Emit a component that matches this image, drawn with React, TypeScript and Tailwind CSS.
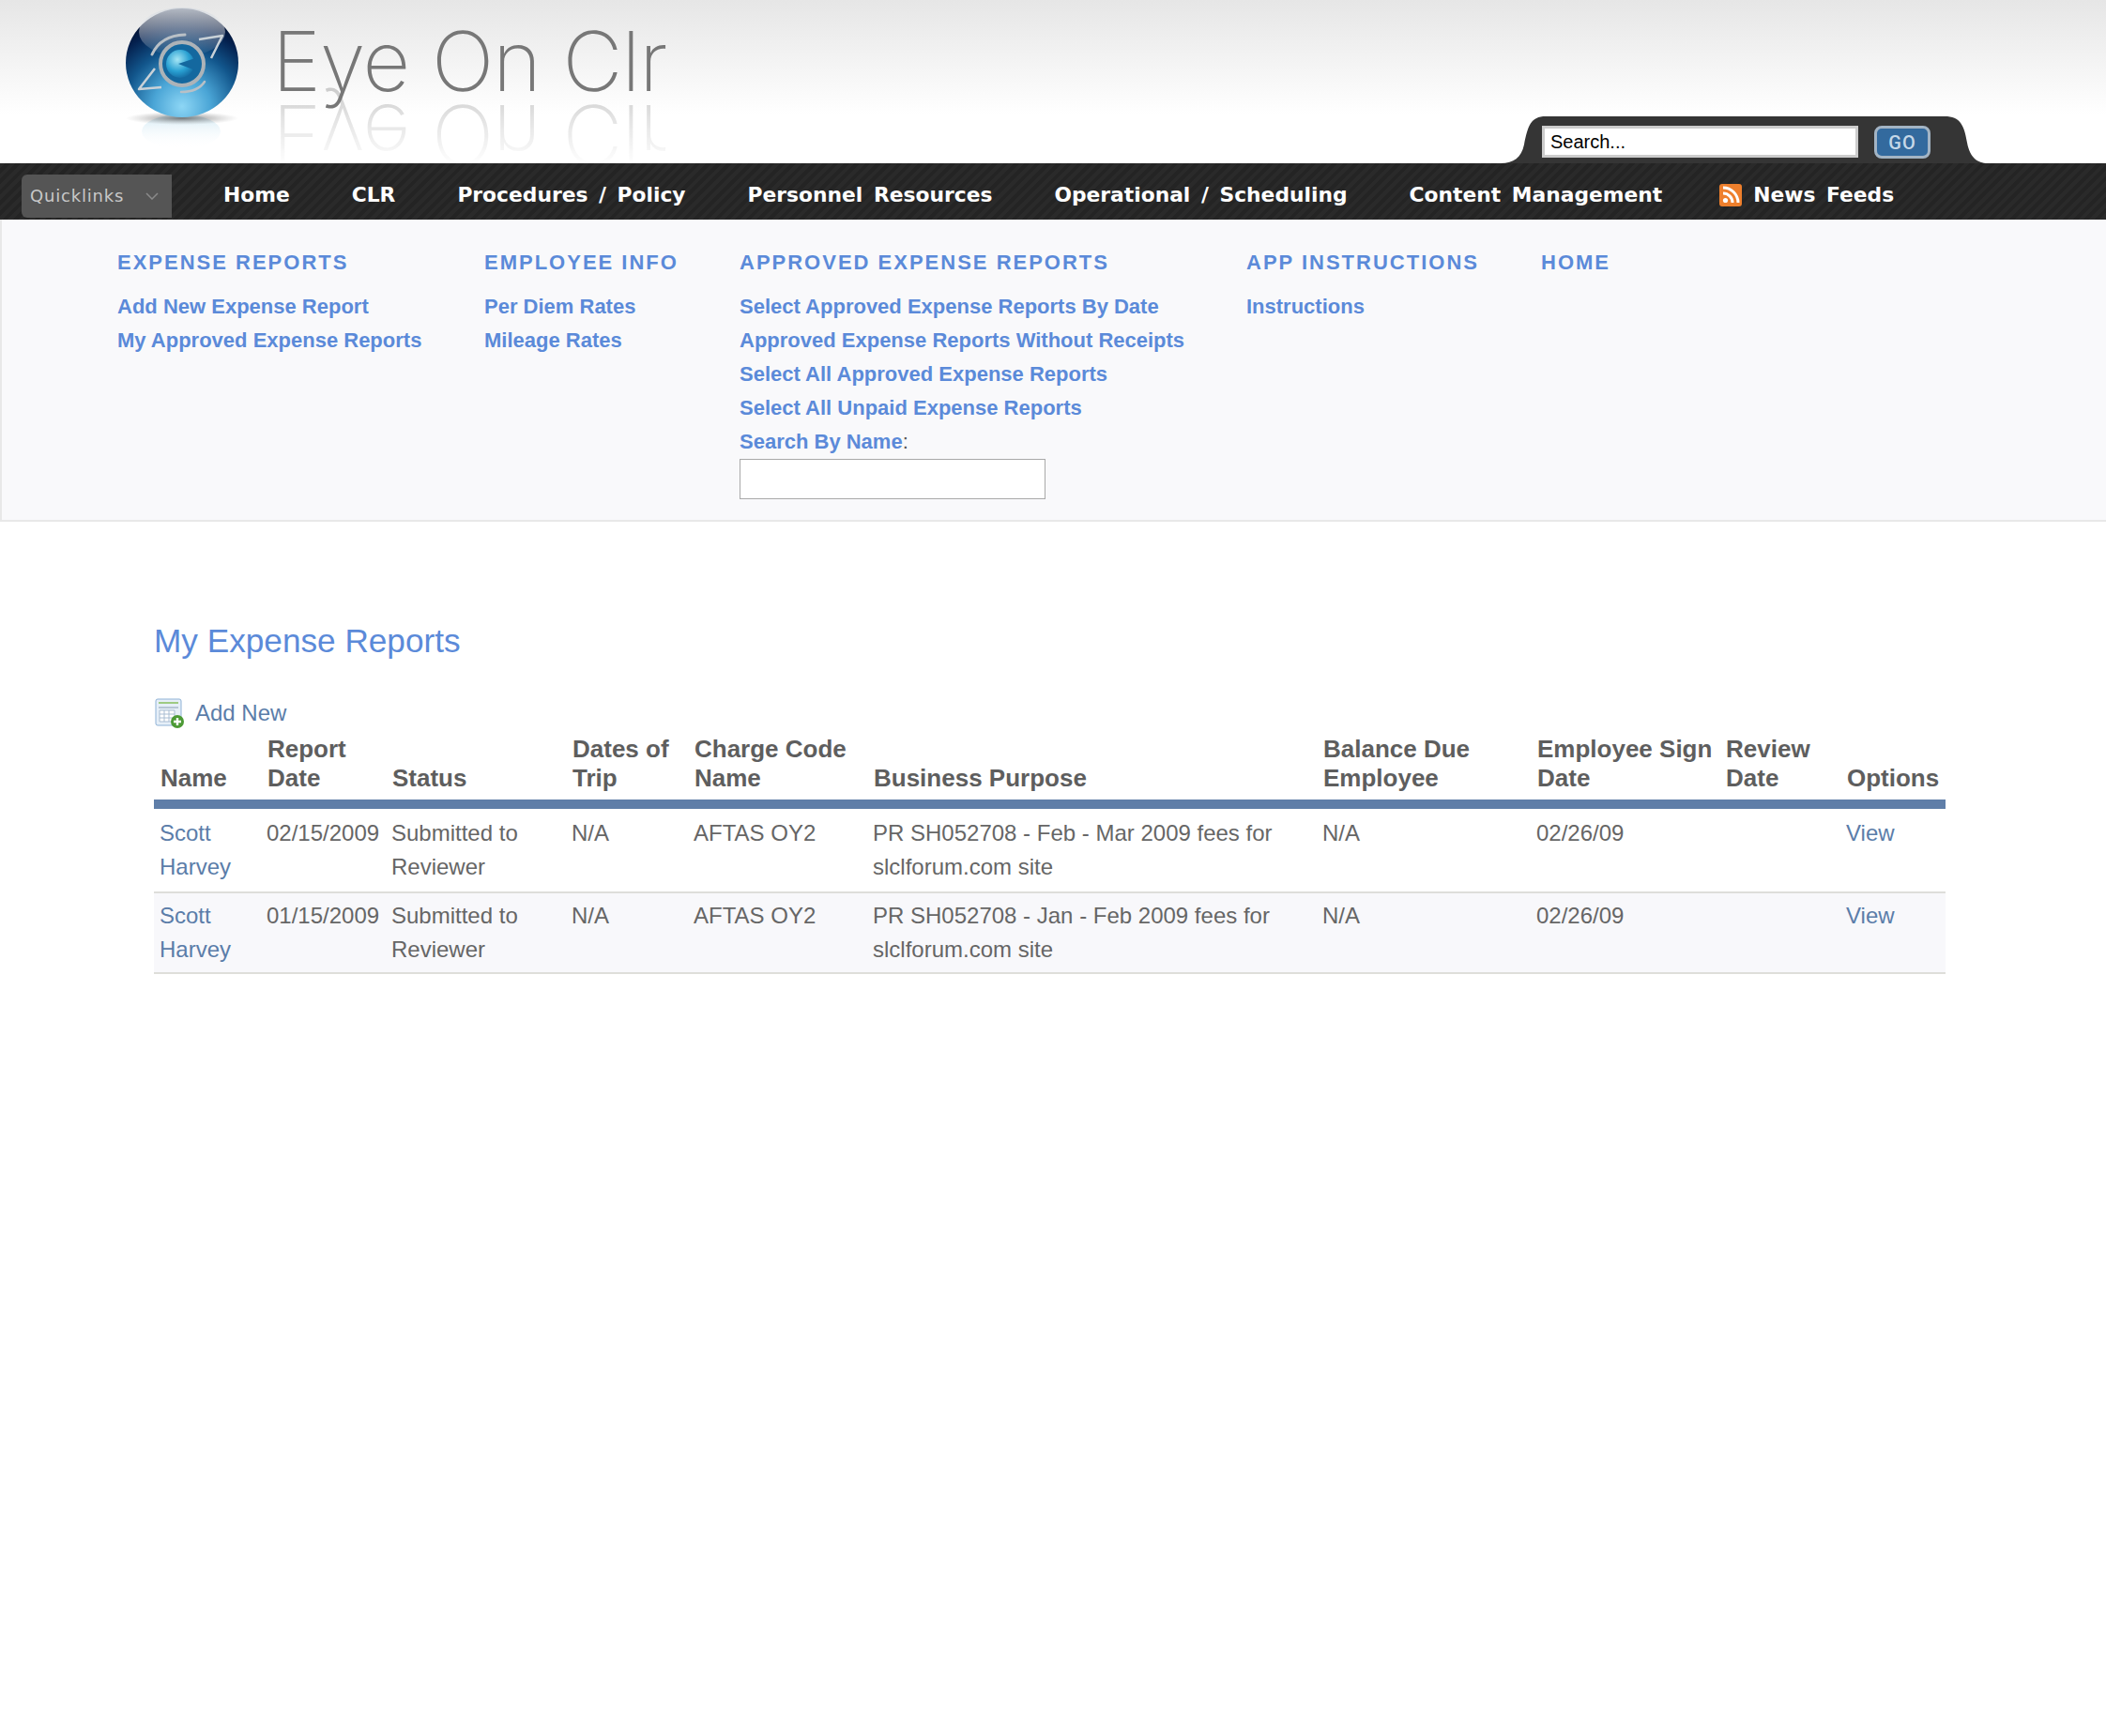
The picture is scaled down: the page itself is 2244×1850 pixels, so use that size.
const navItems = ["Home", "CLR", "Procedures / Policy", "Personnel Resources", "Operational / Scheduling", "Content Management"];

const menus = [
  { title: "EXPENSE REPORTS", links: ["Add New Expense Report", "My Approved Expense Reports"], cls: "w-[391px]" },
  { title: "EMPLOYEE INFO", links: ["Per Diem Rates", "Mileage Rates"], cls: "w-[272px]" },
  {
    title: "APPROVED EXPENSE REPORTS",
    links: ["Select Approved Expense Reports By Date", "Approved Expense Reports Without Receipts", "Select All Approved Expense Reports", "Select All Unpaid Expense Reports"],
    cls: "w-[540px]",
  },
  { title: "APP INSTRUCTIONS", links: ["Instructions"], cls: "w-[314px]" },
  { title: "HOME", links: [], cls: "" },
];

const headers = ["Name", "Report Date", "Status", "Dates of Trip", "Charge Code Name", "Business Purpose", "Balance Due Employee", "Employee Sign Date", "Review Date", "Options"];
const widths = ["w-[114px]", "w-[133px]", "w-[192px]", "w-[130px]", "w-[191px]", "w-[479px]", "w-[228px]", "w-[201px]", "w-[129px]", "w-[112px]"];

const rows = [
  { date: "02/15/2009", purpose: "PR SH052708 - Feb - Mar 2009 fees for slclforum.com site", bg: "", pad: "pt-[8px] pb-[8px]" },
  { date: "01/15/2009", purpose: "PR SH052708 - Jan - Feb 2009 fees for slclforum.com site", bg: "bg-[#f8f8fb]", pad: "pt-[6px] pb-[6px]" },
];

function Globe() {
  return (
    <svg width="130" height="174" viewBox="0 0 130 174" className="block">
      <defs>
        <radialGradient id="ball" cx="0.5" cy="0.9" r="0.85">
          <stop offset="0" stopColor="#8dd6f5" />
          <stop offset="0.3" stopColor="#4aa5d6" />
          <stop offset="0.6" stopColor="#12568c" />
          <stop offset="0.85" stopColor="#04204e" />
          <stop offset="1" stopColor="#020f2e" />
        </radialGradient>
        <linearGradient id="shine" x1="0" y1="0" x2="0" y2="1">
          <stop offset="0" stopColor="#d5dae0" stopOpacity="0.85" />
          <stop offset="1" stopColor="#ffffff" stopOpacity="0" />
        </linearGradient>
        <radialGradient id="iris" cx="0.4" cy="0.35" r="0.7">
          <stop offset="0" stopColor="#a5e6f5" />
          <stop offset="0.6" stopColor="#29a0d2" />
          <stop offset="1" stopColor="#14689f" />
        </radialGradient>
        <linearGradient id="refl" x1="0" y1="0" x2="0" y2="1">
          <stop offset="0" stopColor="#b5dcee" stopOpacity="0.6" />
          <stop offset="1" stopColor="#ffffff" stopOpacity="0" />
        </linearGradient>
        <radialGradient id="shadow" cx="0.5" cy="0.5" r="0.5">
          <stop offset="0" stopColor="#444" stopOpacity="0.7" />
          <stop offset="1" stopColor="#888" stopOpacity="0" />
        </radialGradient>
      </defs>
      <ellipse cx="64" cy="140" rx="42" ry="18" fill="url(#refl)" />
      <ellipse cx="65" cy="126" rx="60" ry="7" fill="url(#shadow)" />
      <ellipse cx="65" cy="67" rx="60" ry="58" fill="url(#ball)" />
      <ellipse cx="65" cy="34" rx="46" ry="26" fill="url(#shine)" />
      <circle cx="65" cy="68" r="23" fill="#14689f" stroke="#adb3b8" strokeWidth="4" />
      <circle cx="63" cy="68" r="15" fill="url(#iris)" />
      <path d="M79 62 L61 68 L79 75z" fill="#14689f" />
      <path d="M33 58 Q42 38 68 37" fill="none" stroke="#b9c0c6" strokeWidth="3" strokeLinecap="round" />
      <path d="M83 42 L108 38 L96 62" fill="none" stroke="#c9d1d7" strokeWidth="2.5" strokeLinejoin="round" />
      <path d="M36 73 L19 95 L43 93" fill="none" stroke="#c9d1d7" strokeWidth="2.5" strokeLinejoin="round" />
      <path d="M64 98 Q82 98 89 87" fill="none" stroke="#b9c0c6" strokeWidth="2.5" strokeLinecap="round" />
    </svg>
  );
}

function SheetIcon() {
  return (
    <svg width="32" height="32" viewBox="0 0 32 32" className="block ml-[1px]">
      <rect x="1" y="1" width="27" height="28" rx="2" fill="#e6eff8" stroke="#8fb2d6" />
      <rect x="4" y="4" width="21" height="2" fill="#9ecb83" />
      <rect x="4" y="9" width="21" height="2" fill="#b7c6d6" />
      <path d="M5 13h16v12H5z" fill="#fff" stroke="#a9bdd2" />
      <path d="M10 13v12M15 13v12M5 17h16M5 21h16" stroke="#a9bdd2" />
      <circle cx="24" cy="25" r="7" fill="#4c9a35" />
      <path d="M24 21v8M20 25h8" stroke="#fff" strokeWidth="2.4" />
    </svg>
  );
}

function LogoText() {
  return (
    <div className="font-['Inter',sans-serif] font-[200] text-[88px] leading-[104px] tracking-[-1px] text-[#777777] whitespace-nowrap">
      Eye On Clr
    </div>
  );
}

export default function App() {
  return (
    <div className="min-h-[1850px] bg-white font-['Liberation_Sans',Arial,sans-serif] text-[24px] leading-[36px] text-[#666666]">
      <header className="relative h-[174px] overflow-hidden bg-gradient-to-b from-[#e6e6e6] to-[#ffffff] to-[70%]">
        <div className="flex pl-[129px]">
          <Globe />
          <div className="ml-[31px] pt-[13px]">
            <LogoText />
            <div className="-mt-[25px] opacity-35 -scale-y-100 [mask-image:linear-gradient(to_bottom,transparent_20%,black)]">
              <LogoText />
            </div>
          </div>
        </div>
        <div className="absolute bottom-0 left-[1599px] w-[519px] h-[50px]">
          <svg width="519" height="50" viewBox="0 0 519 50" className="absolute inset-0">
            <path d="M0 50C14 50 22 44 25 30C29 10 32 0 48 0L473 0C490 0 494 10 497 28C500 44 508 50 519 50Z" fill="#353535" />
          </svg>
          <div className="relative flex items-start pl-[44px] pt-[10px]">
            <div className="w-[337px] h-[34px] bg-white border-[3px] border-[#cccccc] pl-[6px] text-[20px] leading-[28px] text-black">Search...</div>
            <div className="ml-[17px] w-[60px] h-[35px] rounded-[8px] bg-[#336a9e] border-[3px] border-[#a3b4c4] flex items-center justify-center text-[20px] font-medium tracking-[1px] font-['Roboto',sans-serif] text-[#c6d8e8]">GO</div>
          </div>
        </div>
      </header>

      <nav className="h-[60px] bg-[#262626] bg-[repeating-linear-gradient(135deg,#2a2a2a_0,#2a2a2a_4px,#242424_4px,#242424_8px)] flex items-start pl-[23px] font-['DejaVu_Sans',sans-serif] font-bold text-[21.8px] [word-spacing:4px] text-white whitespace-nowrap">
        <div className="w-[160px] h-[46px] mt-[12px] rounded-l-[6px] bg-[#555555] flex items-center justify-between pl-[9px] pr-[14px] font-normal text-[18px] tracking-[0.8px] [word-spacing:0] text-[#c8c8c8]">
          <span>Quicklinks</span>
          <svg width="14" height="8" viewBox="0 0 14 8" fill="none" stroke="#8a8a8a" strokeWidth="1.5"><path d="M1 1l6 6 6-6" /></svg>
        </div>
        <div className="flex items-center h-[60px] pt-[8px] gap-[66px] ml-[55px]">
          {navItems.map((n) => <span key={n}>{n}</span>)}
          <span className="flex items-center gap-[12px] -ml-[5px]">
            <svg width="24" height="24" viewBox="0 0 24 24">
              <rect width="24" height="24" rx="3" fill="#ee7f2c" />
              <circle cx="6.5" cy="17.5" r="2.6" fill="#fff" />
              <path d="M4 10a10 10 0 0 1 10 10M4 4a16 16 0 0 1 16 16" fill="none" stroke="#fff" strokeWidth="3" />
            </svg>
            News Feeds
          </span>
        </div>
      </nav>

      <section className="h-[322px] bg-[#f9f9fb] border-b-2 border-[#e8e8e8] border-l-2 pl-[123px] pt-[28px] flex font-bold text-[22px] leading-[36px] text-[#5b8ad9]">
        {menus.map((m) => (
          <div key={m.title} className={m.cls}>
            <div className="tracking-[2px] h-[47px]">{m.title}</div>
            <ul>
              {m.links.map((l) => <li key={l}>{l}</li>)}
              {m.title === "APPROVED EXPENSE REPORTS" && (
                <>
                  <li>Search By Name<span className="font-normal text-[#555555]">:</span></li>
                  <li><div className="w-[326px] h-[43px] bg-white border border-[#a9a9a9]" /></li>
                </>
              )}
            </ul>
          </div>
        ))}
      </section>

      <main className="pl-[164px] pr-[171px]">
        <h1 className="mt-[103px] text-[35.2px] leading-[48px] font-normal text-[#5b8ad9]">My Expense Reports</h1>
        <div className="mt-[35px] flex items-center h-[36px] text-[#5b7da9]">
          <SheetIcon />
          <span className="ml-[11px]">Add New</span>
        </div>
        <table className="mt-[5px] w-[1909px] table-fixed border-collapse">
          <colgroup>{widths.map((w, i) => <col key={i} className={w} />)}</colgroup>
          <thead>
            <tr className="border-b-[10px] border-[#5f7ea8]">
              {headers.map((h) => (
                <th key={h} className="text-left align-bottom font-bold text-[26px] text-[#5e5e5e] leading-[31px] pl-[7px] pr-0 pb-[7px] pt-0">{h}</th>
              ))}
            </tr>
          </thead>
          <tbody>
            {rows.map((r) => (
              <tr key={r.date} className={`border-b-2 border-[#dededa] ${r.bg}`}>
                <td className={`align-top pl-[6px] text-[#5b7da9] ${r.pad}`}>Scott Harvey</td>
                <td className={`align-top pl-[6px] whitespace-nowrap ${r.pad}`}>{r.date}</td>
                <td className={`align-top pl-[6px] ${r.pad}`}>Submitted to Reviewer</td>
                <td className={`align-top pl-[6px] ${r.pad}`}>N/A</td>
                <td className={`align-top pl-[6px] ${r.pad}`}>AFTAS OY2</td>
                <td className={`align-top pl-[6px] ${r.pad}`}>{r.purpose}</td>
                <td className={`align-top pl-[6px] ${r.pad}`}>N/A</td>
                <td className={`align-top pl-[6px] ${r.pad}`}>02/26/09</td>
                <td className={`align-top pl-[6px] ${r.pad}`}></td>
                <td className={`align-top pl-[6px] text-[#5b7da9] ${r.pad}`}>View</td>
              </tr>
            ))}
          </tbody>
        </table>
      </main>
    </div>
  );
}
